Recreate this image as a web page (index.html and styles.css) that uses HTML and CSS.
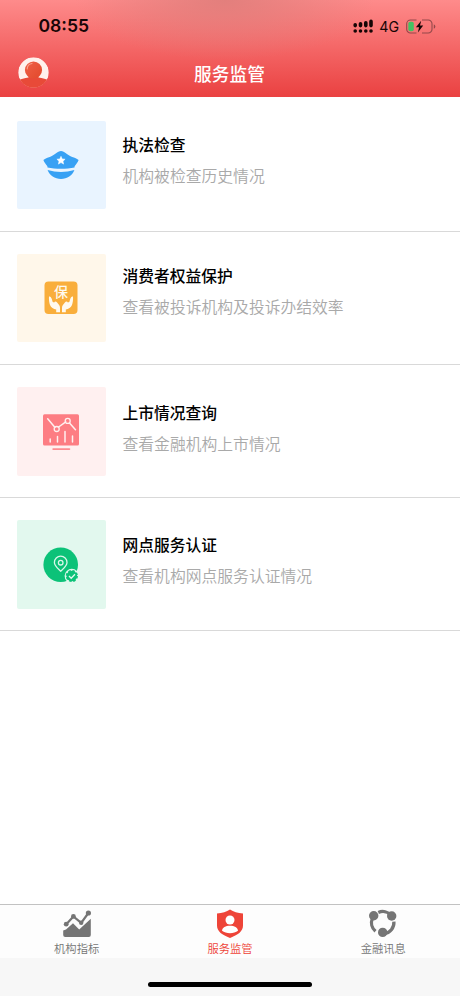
FILE: index.html
```html
<!DOCTYPE html>
<html lang="zh-CN">
  <head>
    <meta charset="UTF-8">
    <meta name="viewport" content="width=device-width, initial-scale=1.0">
    <title>服务监管</title>
    <link rel="stylesheet" href="styles.css">
  </head>
  <body>
    <div class="page">
      <header class="header">
        <div class="status">
          <span class="time">08:55</span>
          <div class="status-right">
            <svg class="signal" width="20" height="15" viewBox="0 0 20 15">
              <g stroke="#160505" stroke-width="3.6" stroke-linecap="round">
                <path d="M2.2 5.8v.8M7.5 4.8v1.8M12.8 3.8v2.8M18 2.4v4.2"/>
                <path d="M2.2 12h.01M7.5 12h.01M12.8 12h.01M18 12h.01"/>
              </g>
            </svg>
            <span class="network">4G</span>
            <svg class="battery" width="30" height="15" viewBox="0 0 30 15">
              <path d="M10.5 1H4.5A3.8 3.8 0 0 0 .7 4.8v5.4A3.8 3.8 0 0 0 4.500 14h6M16 1h6.200A3.800 3.800 0 0 1 26 4.800v5.400A3.800 3.800 0 0 1 22.200 14H16" fill="none" stroke="#93494a" stroke-width="1.100"/>
              <rect x="2.300" y="2.700" width="5.500" height="9.600" rx="1.800" fill="#44c262"/>
              <path d="M15.200 1.700 9.900 8.300h3.200l-1.200 5.200 5.300-6.900H14z" fill="#160505"/>
              <path d="M27.800 5.200a2.500 2.500 0 0 1 0 4.600z" fill="#93494a"/>
            </svg>
          </div>
        </div>
        <div class="navbar">
          <svg class="avatar" width="32" height="32" viewBox="0 0 32 32">
            <defs>
              <clipPath id="avatarClip"><circle cx="16.500" cy="15.500" r="15.300"/></clipPath>
              <linearGradient id="avatarFill" x1="0" y1="0" x2="1" y2="1">
                <stop offset="0" stop-color="#ef6047"/>
                <stop offset="1" stop-color="#e2492b"/>
              </linearGradient>
            </defs>
            <g clip-path="url(#avatarClip)">
              <circle cx="16.500" cy="15.500" r="15.300" fill="#fff1ec"/>
              <path d="M0 32v-7c2-3 7-3.500 11.500-4.500v-4h10v4C26 21.500 31 22 33 25v7z" fill="#e84a38"/>
              <circle cx="16.500" cy="13" r="8.600" fill="url(#avatarFill)"/>
              <path d="M10.200 11.900c.2-3.200 2-5 4.800-5.400" fill="none" stroke="#f9a08a" stroke-width="1.100" stroke-linecap="round"/>
            </g>
          </svg>
          <h1 class="title">服务监管</h1>
        </div>
      </header>

      <main class="list">
        <div class="item">
          <div class="tile blue">
            <svg width="36" height="30" viewBox="0 0 36 30">
              <path d="M18 1c3.500 0 6.500 4.300 12 6.200 2.200.8 4.300 1.700 5.600 2.700-.8 2.500-2.600 4.200-3.800 6.100-.3.500-.3 1-.3 1.500-8 1.800-19 1.800-27 0 0-.5 0-1-.3-1.500C3 14.100 1.200 12.400.4 9.900 1.700 8.900 3.800 8 6 7.200 11.500 5.300 14.500 1 18 1z" fill="#38a1f4"/>
              <path d="M4.600 20c8.800 2.500 18 2.500 26.800 0-2 5.500-7.200 9-13.400 9S6.600 25.500 4.600 20z" fill="#38a1f4"/>
              <path d="m18 6.300 1.200 2.600 2.900.3-2.100 2 .6 2.900-2.600-1.500-2.600 1.500.6-2.900-2.100-2 2.900-.3z" fill="#fff" stroke="#fff" stroke-width=".5"/>
            </svg>
          </div>
          <div class="info">
            <h2 class="name">执法检查</h2>
            <p class="desc">机构被检查历史情况</p>
          </div>
        </div>
        <div class="item up">
          <div class="tile yellow">
            <svg width="34" height="34" viewBox="0 0 34 34">
              <rect x=".5" y=".5" width="33" height="32.500" rx="4" fill="#f9ae3c"/>
              <text class="bao" x="17" y="16" text-anchor="middle">保</text>
              <path d="M5 15.500c1.300-.4 2.200.6 2.700 2.300l1 3.200 1.500.6c.5-1.500 2-1.300 2.900-.2l2 2.600c.6.800.9 1.700.9 2.700v4.600h-3.800v-2.800c-2.700-.5-5.200-2-6.200-4.500-.7-1.800-1.300-5.500-1-8.500z" fill="#fffaf0"/>
              <path d="M29 15.500c-1.300-.4-2.200.6-2.700 2.300l-1 3.200-1.500.6c-.5-1.500-2-1.300-2.900-.2l-2 2.600c-.6.800-.9 1.700-.9 2.700v4.600h3.800v-2.800c2.700-.5 5.200-2 6.200-4.500.7-1.800 1.300-5.500 1-8.500z" fill="#fffaf0"/>
            </svg>
          </div>
          <div class="info">
            <h2 class="name">消费者权益保护</h2>
            <p class="desc">查看被投诉机构及投诉办结效率</p>
          </div>
        </div>
        <div class="item lower">
          <div class="tile pink">
            <svg width="36" height="38" viewBox="0 0 36 38">
              <rect y="1.200" width="36" height="31.300" rx="1.500" fill="#fd7d83"/>
              <rect x="9.300" y="35.200" width="18" height="1.800" rx=".9" fill="#fd8c91"/>
              <g fill="none" stroke="#fff0ef" stroke-linecap="round">
                <path d="m4.700 5.800 7.100 8.500M15.600 14l7.200-5.100M26.500 10l6 6.700" stroke-width="1.500"/>
                <circle cx="13.700" cy="16" r="2.500" stroke-width="1.300"/>
                <circle cx="24.700" cy="7.900" r="2.500" stroke-width="1.300"/>
                <path d="M7.200 26v3M14.500 23.500v5.500M22 18.500v10.500M29.500 23v6" stroke-width="1.500"/>
              </g>
            </svg>
          </div>
          <div class="info">
            <h2 class="name">上市情况查询</h2>
            <p class="desc">查看金融机构上市情况</p>
          </div>
        </div>
        <div class="item down">
          <div class="tile green">
            <svg width="36" height="36" viewBox="0 0 36 36">
              <circle cx="17.700" cy="17.700" r="17.300" fill="#0cc278"/>
              <g fill="none" stroke="#d9f7e9" stroke-width="1.300">
                <path d="M17.700 24.200c-3.200-3-6.300-5.300-6.300-8.700a6.300 6.300 0 0 1 12.600 0c0 3.400-3.100 5.700-6.300 8.700z"/>
                <circle cx="17.700" cy="15.700" r="2.300"/>
              </g>
              <circle cx="28.800" cy="29" r="7.200" fill="#e2f8ee"/>
              <circle cx="28.800" cy="29" r="5.300" fill="#0cc278" stroke="#0cc278" stroke-width="1.600" stroke-dasharray="2.500 1.660"/>
              <path d="m26 29 2.200 2.200 3.800-4" fill="none" stroke="#e2f8ee" stroke-width="1.300"/>
            </svg>
          </div>
          <div class="info">
            <h2 class="name">网点服务认证</h2>
            <p class="desc">查看机构网点服务认证情况</p>
          </div>
        </div>
      </main>

      <nav class="tabbar">
        <div class="tabs">
          <a class="tab">
            <svg width="30" height="30" viewBox="0 0 30 30">
              <path d="M1.200 21.500 4 20.500l7-6.300 6.200 6.400 11.600-10.800V26a2 2 0 0 1-2 2H3.200a2 2 0 0 1-2-2z" fill="#757575"/>
              <path d="m4.300 15.200 7.100-7.800 7.800 6.500 7.200-9.900" fill="none" stroke="#757575" stroke-width="2.200"/>
              <g fill="#757575">
                <circle cx="4.200" cy="15.200" r="2.400"/>
                <circle cx="11.400" cy="7.400" r="2.400"/>
                <circle cx="19.200" cy="13.700" r="2.200"/>
                <circle cx="26.400" cy="4" r="2.600"/>
              </g>
            </svg>
            <span>机构指标</span>
          </a>
          <a class="tab active">
            <svg width="30" height="30" viewBox="0 0 30 30">
              <path d="M15 .6c3.500 2.300 7.600 3.600 13 4v12c0 6-5.300 9.600-13 12.300C7.300 26.200 2 22.600 2 16.600v-12C7.400 4.200 11.500 2.900 15 .6z" fill="#ee4438"/>
              <circle cx="15" cy="11" r="4.500" fill="#fff"/>
              <path d="M7 21.800c.4-3.500 3.500-5 8-5s7.600 1.500 8 5c-2 1.500-5 2.500-8 2.500s-6-1-8-2.500z" fill="#fff"/>
            </svg>
            <span>服务监管</span>
          </a>
          <a class="tab">
            <svg width="30" height="30" viewBox="0 0 30 30">
              <g fill="none" stroke="#757575" stroke-width="3.300">
                <path d="M10.300 3.400A11.200 11.200 0 0 1 23 6.200"/>
                <path d="M4.300 9.500A11.200 11.200 0 0 0 7.500 22.300"/>
                <path d="M25.900 12.700A11.200 11.200 0 0 1 16 24.800"/>
              </g>
              <g fill="#757575">
                <circle cx="5.700" cy="6.700" r="4.700"/>
                <circle cx="23.700" cy="7" r="4.700"/>
                <circle cx="14.700" cy="23.400" r="4.700"/>
              </g>
            </svg>
            <span>金融讯息</span>
          </a>
        </div>
        <div class="home"></div>
      </nav>
    </div>
  </body>
</html>
```
FILE: styles.css
```css
* {
    box-sizing: border-box;
}

body {
    margin: 0;
    background-color: #fff;
    font-family: "Noto Sans CJK SC", "Noto Sans", sans-serif;
}

svg {
    display: block;
}

.page {
    display: flex;
    flex-direction: column;
    height: 996px;
    overflow: hidden;
}

.header {
    height: 97px;
    background: radial-gradient(ellipse 150px 60px at 225px 0, rgba(222, 125, 122, 0.85), rgba(240, 115, 115, 0)), linear-gradient(#fe8b8b, #ea4141);
}

.status {
    display: flex;
    justify-content: space-between;
    height: 50px;
    padding: 14px 24px 0 38.5px;
    color: #160505;
    font-family: Inter, sans-serif;
}

.time {
    font-size: 17.6px;
    font-weight: 600;
    line-height: 24px;
}

.status-right {
    display: flex;
    align-items: center;
    height: 24px;
}

.network {
    margin: 0 7px 0 6px;
    font-size: 14.2px;
    font-weight: 400;
}

.navbar {
    display: grid;
    grid-template-columns: 32px 1fr 32px;
    align-items: center;
    height: 46px;
    padding: 0 17px;
}

.title {
    margin: 0 1px 0 0;
    color: #fff;
    font-size: 17.7px;
    font-weight: 500;
    line-height: 26px;
    text-align: center;
}

.list {
    flex: 1;
    padding-top: 2px;
}

.item {
    display: flex;
    height: 133px;
    padding: 22px 17px 0;
    border-bottom: 1px solid #d9d9d9;
}

.tile {
    display: flex;
    justify-content: center;
    align-items: center;
    width: 89px;
    height: 88px;
    padding-right: 2px;
    border-radius: 2px;
}

.blue {
    background-color: #e9f4ff;
}

.yellow {
    background-color: #fff7ea;
}

.pink {
    height: 89px;
    padding-top: 1px;
    background-color: #fff0f0;
}

.green {
    height: 89px;
    padding-top: 1px;
    background-color: #e2f8ee;
}

.bao {
    fill: #fffaf0;
    font-size: 14px;
    font-weight: 500;
}

.info {
    padding: 12px 0 0 16.5px;
}

.up .info {
    padding-top: 10px;
}

.down .info {
    padding-top: 13px;
}

.lower .info {
    padding-top: 14px;
}

.name {
    margin: 0 0 7px;
    color: #000;
    font-size: 15.75px;
    font-weight: 500;
    line-height: 24px;
}

.desc {
    margin: 0;
    color: #a9a9a9;
    font-size: 15.8px;
    font-weight: 350;
    line-height: 24px;
}

.tabbar {
    height: 92px;
    background-color: #f7f7f7;
    border-top: 1px solid #c2c2c2;
}

.tabs {
    display: flex;
    height: 53px;
    background-color: #fdfdfd;
}

.tab {
    display: flex;
    flex: 1;
    flex-direction: column;
    align-items: center;
    padding-top: 4px;
    color: #757575;
    font-size: 11.3px;
    font-weight: 350;
    line-height: 18px;
}

.tab.active {
    color: #ee4438;
}

.home {
    width: 164px;
    height: 5px;
    margin: 24px auto 0;
    border-radius: 3px;
    background-color: #000;
}
```
